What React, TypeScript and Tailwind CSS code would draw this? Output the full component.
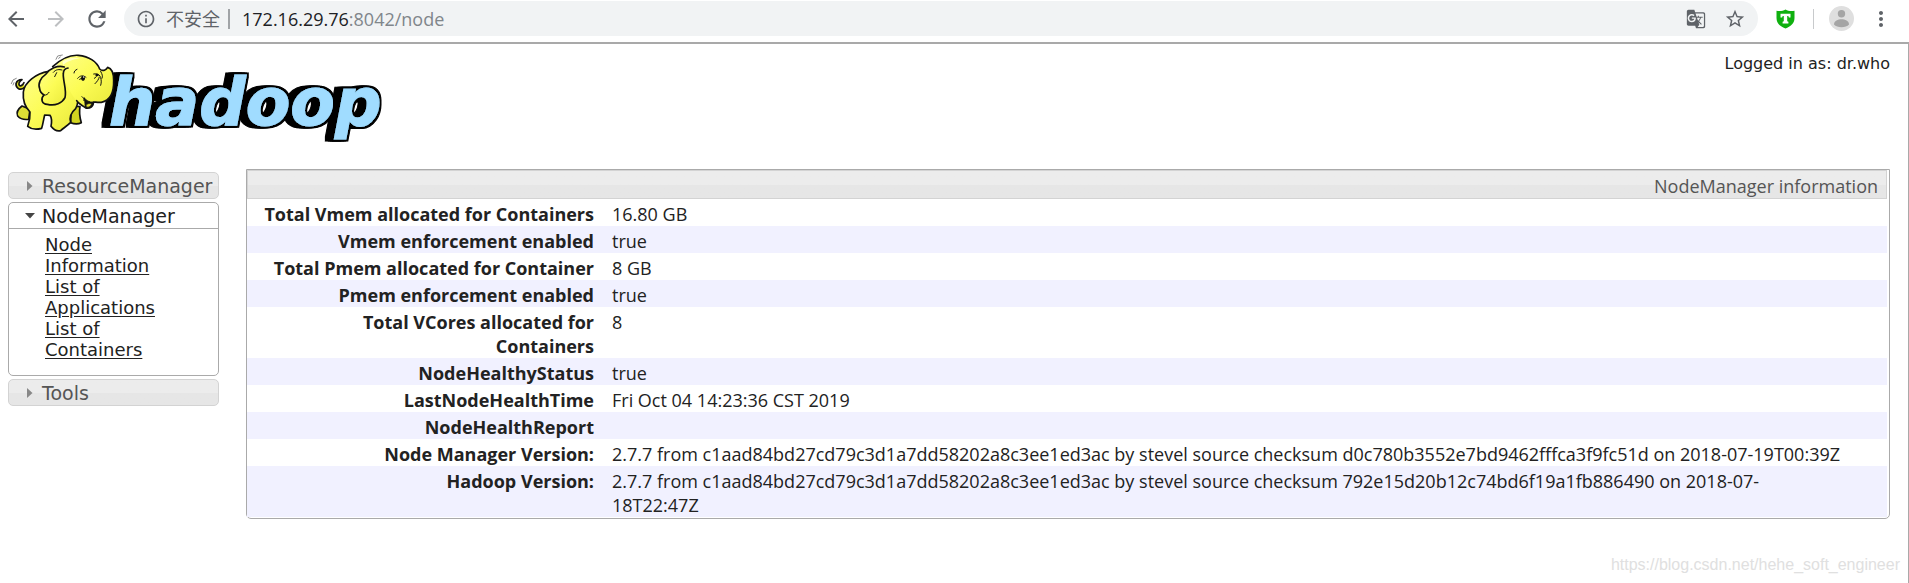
import type { ReactNode } from 'react';
import {
  MdArrowBack,
  MdArrowForward,
  MdGTranslate,
  MdInfoOutline,
  MdMoreVert,
  MdRefresh,
  MdStarBorder,
} from 'react-icons/md';

const INFO_ROWS = [
  { label: 'Total Vmem allocated for Containers', value: '16.80 GB' },
  { label: 'Vmem enforcement enabled', value: 'true' },
  { label: 'Total Pmem allocated for Container', value: '8 GB' },
  { label: 'Pmem enforcement enabled', value: 'true' },
  { label: 'Total VCores allocated for\nContainers', value: '8' },
  { label: 'NodeHealthyStatus', value: 'true' },
  { label: 'LastNodeHealthTime', value: 'Fri Oct 04 14:23:36 CST 2019' },
  { label: 'NodeHealthReport', value: '' },
  {
    label: 'Node Manager Version:',
    value:
      '2.7.7 from c1aad84bd27cd79c3d1a7dd58202a8c3ee1ed3ac by stevel source checksum d0c780b3552e7bd9462fffca3f9fc51d on 2018-07-19T00:39Z',
  },
  {
    label: 'Hadoop Version:',
    value:
      '2.7.7 from c1aad84bd27cd79c3d1a7dd58202a8c3ee1ed3ac by stevel source checksum 792e15d20b12c74bd6f19a1fb886490 on 2018-07-\n18T22:47Z',
  },
];

const NODE_LINKS = ['Node Information', 'List of Applications', 'List of Containers'];

export default function App() {
  return (
    <div className="flex min-h-screen flex-col bg-white font-['Open_Sans','Noto_Sans_CJK_SC',sans-serif] text-[#222222]">
      <BrowserBar />
      <div className="flex flex-1 flex-col border-t-2 border-r border-[#a9a9a9] pr-[18px]">
        <header className="flex items-start justify-between">
          <HadoopLogo />
          <div className="pt-2 font-['DejaVu_Sans',sans-serif] text-base leading-6">
            Logged in as: dr.who
          </div>
        </header>
        <div className="flex items-start gap-[27px] pt-[15px] pl-2">
          <Sidebar />
          <InfoTable />
        </div>
        <footer className="mt-auto -mr-2.5 pb-1.5 text-right font-['Liberation_Sans',sans-serif] text-base leading-6 text-[#e0e0e0]">
          https://blog.csdn.net/hehe_soft_engineer
        </footer>
      </div>
    </div>
  );
}

function BrowserBar() {
  return (
    <div className="flex h-[42px] items-start pr-4 pl-1 text-[#5f6368]">
      <div className="flex h-[37px] items-center gap-4">
        <button type="button" aria-label="Back">
          <MdArrowBack size={24} />
        </button>
        <button type="button" aria-label="Forward" className="text-[#bdbfc1]">
          <MdArrowForward size={24} />
        </button>
        <button type="button" aria-label="Reload">
          <MdRefresh size={26} />
        </button>
      </div>
      <div className="mt-px ml-3.5 flex h-[35px] flex-1 items-center rounded-full bg-[#f1f3f4] pr-3 pl-3 text-[18px] leading-6">
        <MdInfoOutline size={20} className="shrink-0" />
        <span className="ml-2.5">不安全</span>
        <span className="mr-3 ml-2 h-5 w-0.5 bg-[#a0a3a6]" />
        <span className="text-[#202124]">172.16.29.76</span>
        <span className="text-[#80868b]">:8042/node</span>
        <button type="button" aria-label="Translate this page" className="ml-auto">
          <MdGTranslate size={20} />
        </button>
        <button type="button" aria-label="Bookmark this page" className="ml-[18px]">
          <MdStarBorder size={22} />
        </button>
      </div>
      <div className="flex h-[37px] items-center pl-[18px]">
        <button type="button" aria-label="Extension">
          <ShieldIcon />
        </button>
        <span className="ml-[18px] h-5 w-px bg-[#c8cacc]" />
        <button type="button" aria-label="Profile" className="ml-[15px]">
          <AvatarIcon />
        </button>
        <button type="button" aria-label="Menu" className="ml-[15px]">
          <MdMoreVert size={24} />
        </button>
      </div>
    </div>
  );
}

function ShieldIcon() {
  return (
    <svg width="19" height="20" viewBox="0 0 19 20" className="block">
      <path
        d="M9.500 0.500C12 2 15 2.300 18.500 1.800V9C18.500 14.500 14.500 17.500 9.500 19.500C4.500 17.500 0.500 14.500 0.500 9V1.800C4 2.300 7 2 9.500 0.500Z"
        fill="#0fb00f"
      />
      <path d="M4.500 4.800H14.500V8.500H12.900L12.300 7.100H11.200V12.300L12.400 12.800V14.400H6.600V12.800L7.800 12.300V7.100H6.700L6.100 8.500H4.500Z" fill="#fff" />
    </svg>
  );
}

function AvatarIcon() {
  return (
    <svg width="25" height="25" viewBox="0 0 25 25" className="block">
      <circle cx="12.500" cy="12.500" r="12.500" fill="#dfdfdf" />
      <circle cx="12.500" cy="7.800" r="3.700" fill="#a5a5a5" />
      <path d="M5 18.500C5 14.800 9 13.300 12.500 13.300S20 14.800 20 18.500C18.500 20.300 15.500 21.200 12.500 21.200S6.500 20.300 5 18.500Z" fill="#a5a5a5" />
    </svg>
  );
}

function Sidebar() {
  return (
    <nav className="mt-[3px] w-[211px] shrink-0 font-['DejaVu_Sans',sans-serif]">
      <SidebarHeading>ResourceManager</SidebarHeading>
      <div className="mt-[3px] mb-[3px] rounded-[5px] border border-[#aaaaaa]">
        <button
          type="button"
          aria-expanded="true"
          className="flex h-[26px] w-full items-center border-b border-[#aaaaaa] pl-4 text-[19px] leading-6 text-[#212121]"
        >
          <svg width="10" height="6" viewBox="0 0 10 6" className="mr-[7px] shrink-0">
            <path d="M0 0H10L5 5.500Z" fill="#454545" />
          </svg>
          NodeManager
        </button>
        <ul className="px-9 pt-[5px] pb-[15px] text-[18px] leading-[21px] text-[#222222]">
          {NODE_LINKS.map((link) => (
            <li key={link}>
              <a href="#" className="underline underline-offset-2">
                {link}
              </a>
            </li>
          ))}
        </ul>
      </div>
      <SidebarHeading>Tools</SidebarHeading>
    </nav>
  );
}

function SidebarHeading({ children }: { children: ReactNode }) {
  return (
    <button
      type="button"
      aria-expanded="false"
      className="flex h-[27px] w-full items-center rounded-[5px] border border-[#d3d3d3] bg-linear-to-b from-[#ececec] from-50% to-[#e6e6e6] to-50% pl-[18px] text-[19px] leading-6 text-[#555555]"
    >
      <svg width="6" height="10" viewBox="0 0 6 10" className="mr-[9px] shrink-0">
        <path d="M0 0L5.500 5L0 10Z" fill="#888888" />
      </svg>
      {children}
    </button>
  );
}

function InfoTable() {
  return (
    <div className="min-w-0 flex-1 rounded-b-[5px] border border-[#aaaaaa] pr-0.5 pb-px">
      <table className="w-full table-fixed border-separate border-spacing-0 text-[18px] leading-6">
        <colgroup>
          <col className="w-[356px]" />
          <col />
        </colgroup>
        <thead>
          <tr>
            <th
              colSpan={2}
              className="border border-[#d3d3d3] bg-linear-to-b from-[#ececec] from-50% to-[#e6e6e6] to-50% px-2 pt-[3px] text-right font-normal text-[#555555]"
            >
              NodeManager information
            </th>
          </tr>
        </thead>
        <tbody>
          {INFO_ROWS.map((row) => (
            <tr key={row.label} className="whitespace-pre-line even:bg-[#f1f1ff]">
              <th scope="row" className="px-[9px] pt-[3px] text-right align-top font-bold">
                {row.label}
              </th>
              <td className="px-[9px] pt-[3px] align-top">{row.value}</td>
            </tr>
          ))}
        </tbody>
      </table>
    </div>
  );
}

function HadoopLogo() {
  return (
    <svg width="400" height="110" viewBox="0 0 400 110" role="img" aria-label="hadoop" className="block">
      <defs>
        <linearGradient id="hide" x1="0" y1="0" x2="1" y2="1">
          <stop offset="0" stopColor="#ffff8a" />
          <stop offset="0.5" stopColor="#fcfc55" />
          <stop offset="1" stopColor="#e8e83a" />
        </linearGradient>
        {/* black outline, extruded to the left */}
        <filter id="extrude" x="-5%" y="-10%" width="110%" height="120%">
          <feMorphology in="SourceAlpha" operator="dilate" radius="1.500" result="outline" />
          <feOffset in="outline" dx="-2" result="o1" />
          <feOffset in="outline" dx="-4" result="o2" />
          <feOffset in="outline" dx="-7" result="o3" />
          <feMerge>
            <feMergeNode in="o3" />
            <feMergeNode in="o2" />
            <feMergeNode in="o1" />
            <feMergeNode in="outline" />
            <feMergeNode in="SourceGraphic" />
          </feMerge>
        </filter>
      </defs>
      <text
        x="109"
        y="81"
        fill="#a0dcff"
        stroke="#a0dcff"
        strokeWidth="1"
        filter="url(#extrude)"
        className="font-['DejaVu_Sans',sans-serif] text-[65px] font-bold italic"
      >
        hadoop
      </text>
      <g transform="scale(0.3333)" stroke="#111" strokeWidth="5" strokeLinecap="round" strokeLinejoin="round">
        {/* far legs */}
        <path d="M66 186C54 195 49 207 53 216C60 224 72 228 86 226L90 196Z" fill="#dcde35" />
        <path d="M214 186L240 188C237 205 239 220 244 236C234 241 222 240 212 236Z" fill="#d2d420" />
        {/* tail */}
        <path d="M73 131C61 141 47 133 48 119C50 112 58 107 66 107C58 113 55 119 58 124C63 129 69 121 72 116" fill="#d9da22" />
        {/* body and near legs */}
        <path
          d="M146 82C108 88 73 115 70 144C68 168 76 190 90 204C91 220 87 236 83 247C94 256 111 257 125 253C129 240 131 225 134 213L150 214C157 224 155 237 153 247C160 256 171 263 182 260C191 252 202 245 212 235C208 221 214 205 227 194C241 169 232 118 210 97Z"
          fill="url(#hide)"
        />
        {/* head, trunk and mouth */}
        <path
          d="M230 170C215 152 202 130 190 95L170 62C183 45 207 32 235 34C268 37 291 54 299 75C309 84 319 77 323 70C335 73 341 87 341 109C342 144 332 170 304 175C294 176 286 174 280 174C281 187 270 195 257 192C249 184 237 182 230 170"
          fill="url(#hide)"
          stroke="none"
        />
        <path
          d="M158 68C183 45 207 32 235 34C268 37 291 54 299 75C309 84 319 77 323 70C335 73 341 87 341 109C342 144 332 170 304 175C294 176 286 174 280 174C281 187 270 195 257 192C249 184 237 182 230 170"
          fill="none"
        />
        <path d="M253 162C258 170 268 175 280 175C279 186 269 192 258 190C253 184 257 176 253 162Z" fill="#171710" strokeWidth="3" />
        <path d="M258 188C257 179 267 177 275 180C272 187 265 192 258 188Z" fill="#e3e033" strokeWidth="2" />
        <path d="M246 158C250 162 252 164 252 170" fill="none" strokeWidth="3" />
        {/* ear */}
        <path
          d="M193 69C172 63 148 74 137 91C122 101 113 119 119 134C120 145 127 150 132 153C121 164 125 180 142 181C166 187 187 177 195 161C201 137 188 109 190 89C190 78 195 73 204 72"
          fill="url(#hide)"
        />
        <path d="M132 153C139 155 144 150 147 145M160 85C168 75 178 76 186 78M164 98L170 86" fill="none" strokeWidth="3" />
        {/* face */}
        <path d="M222 87C222 82 226 78 231 76M233 103C240 94 250 93 258 100M239 106L245 103M281 90C289 88 296 90 301 97M283 103L289 98M285 119C291 113 296 107 298 99M302 101C305 110 304 118 302 124M302 82C307 92 309 96 306 103" fill="none" strokeWidth="3" />
        <ellipse cx="249" cy="103" rx="6" ry="8" fill="#111" stroke="none" />
        <ellipse cx="291" cy="93" rx="5" ry="4" fill="#111" stroke="none" />
        <circle cx="251" cy="99" r="2" fill="#fff" stroke="none" />
        {/* soft highlights */}
        <path d="M187 53C202 41 223 39 240 43C218 46 200 53 190 63Z" fill="#ffffc6" stroke="none" />
        {/* motion marks */}
        <path d="M168 46L173 36L187 33M176 43L181 39M34 119L39 108L49 103M39 123L42 116" fill="none" stroke="#8b8b8b" strokeWidth="3" />
      </g>
    </svg>
  );
}
